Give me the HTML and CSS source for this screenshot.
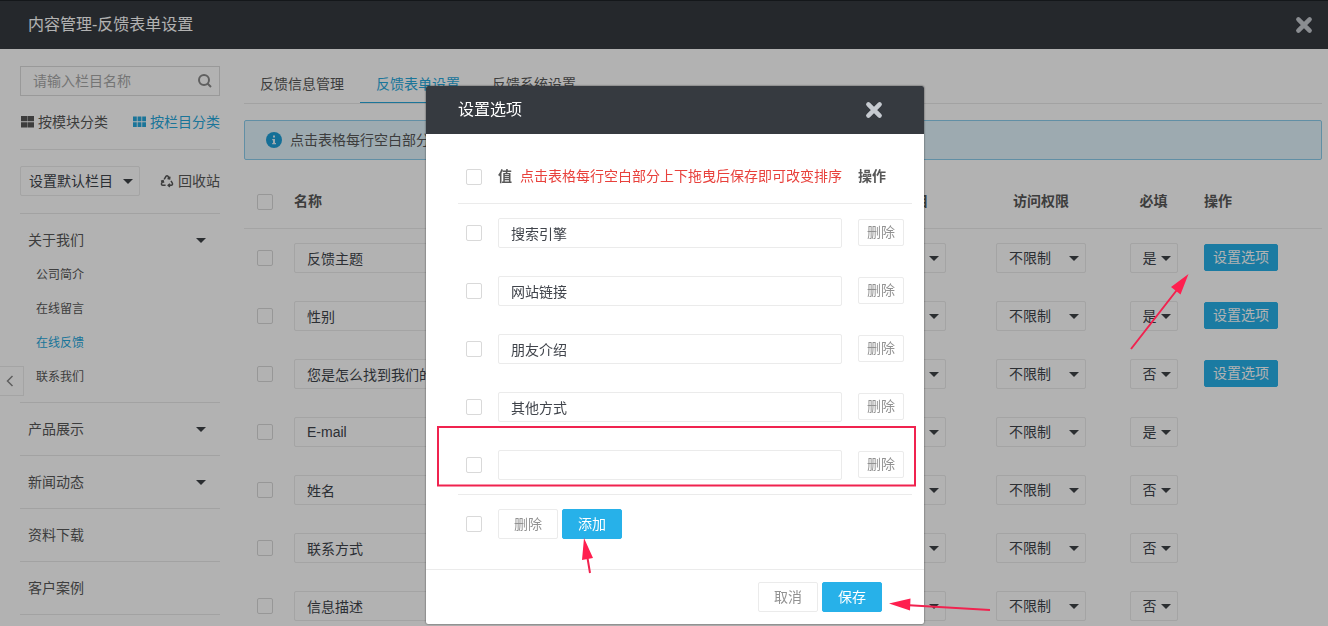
FILE: index.html
```html
<!DOCTYPE html>
<html lang="zh-CN">
<head>
<meta charset="utf-8">
<title>内容管理-反馈表单设置</title>
<link rel="stylesheet" href="styles.css">
</head>
<body>
<div class="app">
  <header class="topbar">
    <h1 class="bar-title">内容管理-反馈表单设置</h1>
    <button class="close" type="button" aria-label="关闭"><svg viewBox="0 0 16 16" width="16" height="16"><path d="M3 3L13 13M13 3L3 13"/></svg></button>
  </header>
  <div class="layout">
    <aside class="sidebar">
      <div class="search">
        <input class="search-input" type="text" placeholder="请输入栏目名称" aria-label="请输入栏目名称">
        <svg class="search-icon" viewBox="0 0 14 14" width="14" height="14"><circle cx="6" cy="6" r="5"/><path d="M9.5 9.5L13 13"/></svg>
      </div>
      <div class="modes">
        <a class="mode" href="#"><svg viewBox="0 0 13 12" width="13" height="12"><path d="M0 0h6.300v5.200H0zM6.700 0H13v5.200H6.700zM0 6.200h6.300v5.200H0zM6.700 6.200H13v5.200H6.700z"/></svg>按模块分类</a>
        <a class="mode mode-active" href="#"><svg viewBox="0 0 13 12" width="13" height="12"><path d="M0 .5h3.800v4.700H0zM4.600 .5h3.800v4.700H4.600zM9.200 .5H13v4.700H9.200zM0 6.200h3.800v4.700H0zM4.600 6.200h3.800v4.700H4.600zM9.200 6.200H13v4.700H9.200z"/></svg>按栏目分类</a>
      </div>
      <div class="tools">
        <span class="select select-default"><select aria-label="默认栏目"><option>设置默认栏目</option></select></span>
        <a class="recycle" href="#"><svg viewBox="0 0 14 14" width="14" height="14"><path d="M4.200 5.400L6 2.300Q7 1.200 8 2.300L9.400 4.600M9.900 2.600L9.600 4.900L7.500 4.500M11 6.800L12.400 9.200Q12.900 11.200 11.200 11.300H8.400M9.900 9.700L8.200 11.300L9.900 12.900M5.600 11.300H2.800Q1 11.200 1.600 9.200L3 6.800M1 7.300L3.100 6.700L3.700 8.700"/></svg>回收站</a>
      </div>
      <ul class="menu">
        <li class="menu-item menu-open">
          <a class="menu-link menu-parent" href="#">关于我们</a>
          <ul class="submenu">
            <li><a href="#">公司简介</a></li>
            <li><a href="#">在线留言</a></li>
            <li><a class="current" href="#">在线反馈</a></li>
            <li><a href="#">联系我们</a></li>
          </ul>
        </li>
        <li class="menu-item"><a class="menu-link menu-parent" href="#">产品展示</a></li>
        <li class="menu-item"><a class="menu-link menu-parent" href="#">新闻动态</a></li>
        <li class="menu-item"><a class="menu-link" href="#">资料下载</a></li>
        <li class="menu-item"><a class="menu-link" href="#">客户案例</a></li>
      </ul>
      <button class="collapse" type="button" aria-label="收起"><svg viewBox="0 0 8 12" width="8" height="12"><path d="M6.500 1L1.500 6L6.500 11"/></svg></button>
    </aside>
    <main class="content">
      <nav class="tabs">
        <a class="tab" href="#">反馈信息管理</a>
        <a class="tab tab-active" href="#">反馈表单设置</a>
        <a class="tab" href="#">反馈系统设置</a>
      </nav>
      <p class="notice"><svg viewBox="0 0 16 16" width="16" height="16"><circle cx="8" cy="8" r="8"/><path d="M7 3.500h2v2H7zM6.200 7H9v4h1v1.200H6.200V11H7V8.200H6.200z"/></svg>点击表格每行空白部分上下拖曳后保存即可改变排序</p>
      <table class="grid">
        <colgroup><col class="c-check"><col><col class="c-type"><col class="c-field"><col class="c-access"><col class="c-need"><col class="c-act"></colgroup>
        <thead>
          <tr><th class="center"><input class="check" type="checkbox" aria-label="全选"></th><th>名称</th><th class="center">字段类型</th><th class="center">所属栏目</th><th class="center">访问权限</th><th class="center">必填</th><th>操作</th></tr>
        </thead>
        <tbody id="fields"></tbody>
      </table>
    </main>
  </div>
</div>

<div class="overlay">
  <section class="modal" role="dialog" aria-labelledby="modal-title">
    <header class="modal-head">
      <h2 class="bar-title" id="modal-title">设置选项</h2>
      <button class="close" type="button" aria-label="关闭"><svg viewBox="0 0 16 16" width="16" height="16"><path d="M3 3L13 13M13 3L3 13"/></svg></button>
    </header>
    <div class="modal-body">
      <table class="grid options">
        <colgroup><col class="o-check"><col><col class="o-act"></colgroup>
        <thead>
          <tr><th><input class="check" type="checkbox" aria-label="全选"></th><th><span class="value-head">值<span class="hint">点击表格每行空白部分上下拖曳后保存即可改变排序</span></span></th><th>操作</th></tr>
        </thead>
        <tbody id="options"></tbody>
        <tfoot>
          <tr><td><input class="check" type="checkbox" aria-label="全选"></td><td colspan="2"><div class="actions"><button class="btn" type="button">删除</button><button class="btn btn-primary" type="button">添加</button></div></td></tr>
        </tfoot>
      </table>
    </div>
    <footer class="modal-foot actions"><button class="btn" type="button">取消</button><button class="btn btn-primary" type="button">保存</button></footer>
  </section>
</div>

<svg class="marks" viewBox="0 0 1328 626" width="1328" height="626" aria-hidden="true">
  <rect x="438" y="427" width="477" height="58.500"/>
  <path d="M1131 349L1180 286M590 573L587 555M990 610L905 605"/>
  <path class="head" d="M1188.500 274L1171 287L1180.500 294.500zM584 538L582 560L593 558zM889 603.500L910.500 598.500L910 610.500z"/>
</svg>
<script src="app.js"></script>
</body>
</html>
```
FILE: styles.css
```css
* { box-sizing: border-box; }
body {
  margin: 0;
  font: 14px/20px "Liberation Sans", "Noto Sans CJK SC", sans-serif;
  color: #585858;
  background: #fff;
}
h1, h2, p, ul { margin: 0; padding: 0; }
ul { list-style: none; }
a { color: inherit; text-decoration: none; }
button, input, select { font: inherit; color: inherit; margin: 0; }
svg { flex: none; }

.app { height: 100vh; overflow: hidden; }
.topbar {
  display: flex;
  align-items: center;
  justify-content: space-between;
  height: 49px;
  padding: 0 15px 0 28px;
  background: #363a40;
  border-top: 1px solid #1e2226;
  color: #fff;
}
.bar-title { font-size: 16px; line-height: 24px; font-weight: 400; }
.close { display: flex; padding: 0; border: 0; background: none; cursor: pointer; }
.close svg { width: 18px; height: 18px; fill: none; stroke: #c6cad0; stroke-width: 4; stroke-linecap: round; }

.layout { display: flex; gap: 24px; padding: 17px 6px 0 20px; }
.sidebar { flex: none; width: 200px; }
.content { flex: 1; min-width: 0; }

.search { display: flex; align-items: center; height: 30px; padding: 0 7px 0 12px; border: 1px solid #dcdcdc; }
.search-input { flex: 1; min-width: 0; padding: 0; border: 0; outline: 0; background: none; }
.search-input::placeholder { color: #a8a8a8; opacity: 1; }
.search-icon { fill: none; stroke: #8a8a8a; stroke-width: 2; }
.modes { display: flex; justify-content: space-between; padding: 16px 0 17px; border-bottom: 1px solid #e8e8e8; }
.mode { display: flex; align-items: center; gap: 4px; padding-left: 1px; }
.mode svg { fill: currentColor; }
.mode-active, .current { color: #27a8dc; }
.tools { display: flex; align-items: center; justify-content: space-between; padding: 16px 0 17px; border-bottom: 1px solid #e8e8e8; }
.recycle { display: flex; align-items: center; gap: 4px; }
.recycle svg { fill: none; stroke: currentColor; stroke-width: 1.5; }

.menu-item { padding: 12px 0; border-bottom: 1px solid #e8e8e8; }
.menu-open { padding-bottom: 8px; }
.menu-link { display: flex; align-items: center; justify-content: space-between; padding: 4px 14px 4px 8px; }
.menu-parent::after, .select::after {
  content: "";
  border: 5px solid transparent;
  border-top-color: #3e4347;
  border-bottom: 0;
}
.submenu { padding-top: 4px; font-size: 12px; line-height: 34px; }
.submenu a { display: block; padding-left: 16px; }
.collapse {
  position: absolute;
  left: 0;
  top: 366px;
  display: flex;
  align-items: center;
  width: 24px;
  height: 30px;
  padding: 0 0 0 6px;
  border: 1px solid #ebebeb;
  border-left: 0;
  background: #fff;
}
.collapse svg { fill: none; stroke: #888; stroke-width: 1.5; }

.tabs { display: flex; border-bottom: 1px solid #e8e8e8; }
.tab { padding: 8px 16px; border-bottom: 1px solid transparent; }
.tab-active { color: #27a8dc; border-bottom-color: #27a8dc; }
.notice {
  display: flex;
  align-items: center;
  gap: 8px;
  height: 40px;
  margin: 16px 0 15px;
  padding: 0 21px;
  border: 1px solid #8ccdec;
  border-radius: 2px;
  background: #e1f4fc;
}
.notice circle { fill: #1e9fd8; }
.notice path { fill: #e1f4fc; }

.grid { width: 100%; table-layout: fixed; border-collapse: separate; border-spacing: 0; }
.grid th, .grid td { padding: 0 8px; text-align: left; vertical-align: middle; }
.grid th { height: 54px; font-weight: 700; border-bottom: 1px solid #ebebeb; }
.grid th + th { padding-bottom: 2px; }
.grid td { height: 58px; }
.grid tbody td:last-child { padding-bottom: 2px; }
.grid .center { text-align: center; }
.grid .select { vertical-align: middle; }
.c-check { width: 42px; }
.c-type { width: 160px; }
.c-field { width: 141px; }
.c-access { width: 140px; }
.c-need { width: 85px; }
.c-act { width: 126px; }

.check {
  appearance: none;
  display: block;
  width: 16px;
  height: 16px;
  margin: 0 auto;
  border: 1px solid #d9d9d9;
  border-radius: 2px;
  background: #fff;
}
.field {
  display: block;
  width: 100%;
  height: 30px;
  padding: 0 12px;
  border: 1px solid #ebebeb;
  border-radius: 2px;
  background: #fff;
  color: #40444b;
  outline: 0;
}
.select { display: inline-grid; align-items: center; width: 90px; height: 30px; color: #40444b; }
.select > select, .select::after { grid-area: 1 / 1; }
.select > select {
  appearance: none;
  width: 100%;
  height: 30px;
  padding: 0 0 0 12px;
  border: 1px solid #ebebeb;
  border-radius: 2px;
  background: #fff;
}
.select::after { z-index: 1; justify-self: end; margin-right: 7px; pointer-events: none; }
.select-need { width: 48px; }
.select-default { width: 120px; }
.select-default > select { padding-left: 8px; }

.btn {
  height: 30px;
  padding: 0 15px;
  border: 1px solid #ebebeb;
  border-radius: 2px;
  background: #fff;
  color: #929292;
  white-space: nowrap;
  cursor: pointer;
}
.btn-primary { background: #27b1e9; border-color: #27b1e9; color: #fff; }
.btn-small { display: block; height: 27px; padding: 0 8px; }
.actions { display: flex; gap: 4px; }

.overlay {
  position: fixed;
  z-index: 2;
  inset: 0;
  display: flex;
  justify-content: center;
  align-items: flex-start;
  padding: 86px 0 0 22px;
  background: rgba(0, 0, 0, .3);
}
.modal { width: 498px; background: #fff; border-radius: 2px; overflow: hidden; box-shadow: 0 0 2px rgba(0, 0, 0, .7); }
.modal-head {
  display: flex;
  align-items: center;
  justify-content: space-between;
  height: 48px;
  padding: 0 41px 0 32px;
  background: #363a40;
  color: #fff;
}
.modal-body { padding: 16px 12px 17px 32px; }
.modal-foot { justify-content: flex-end; padding: 12px 42px 12px 0; border-top: 1px solid #ebebeb; }
.options tfoot td { border-top: 1px solid #ebebeb; }
.o-check { width: 32px; }
.o-act { width: 62px; }
.value-head { display: flex; gap: 8px; white-space: nowrap; }
.hint { color: #e8413c; font-weight: 400; }

.marks { position: fixed; z-index: 3; left: 0; top: 0; pointer-events: none; fill: none; stroke: #f0234f; stroke-width: 2; }
.marks .head { fill: #ff1f4f; stroke: none; }
```
FILE: app.js
```js
const fields = [
  ["反馈主题", "是", true],
  ["性别", "是", true],
  ["您是怎么找到我们的", "否", true],
  ["E-mail", "是", false],
  ["姓名", "否", false],
  ["联系方式", "否", false],
  ["信息描述", "否", false]
];
const options = ["搜索引擎", "网站链接", "朋友介绍", "其他方式", ""];

const select = (label, text, cls = "") =>
  `<span class="select ${cls}"><select aria-label="${label}"><option>${text}</option></select></span>`;

document.getElementById("fields").innerHTML = fields.map(([name, need, configurable]) => `
  <tr>
    <td><input class="check" type="checkbox" aria-label="选择${name}"></td>
    <td><input class="field" type="text" value="${name}" aria-label="名称"></td>
    <td class="center">${select("字段类型", "简短")}</td>
    <td class="center">${select("所属栏目", "所有")}</td>
    <td class="center">${select("访问权限", "不限制")}</td>
    <td class="center">${select("必填", need, "select-need")}</td>
    <td>${configurable ? '<button class="btn btn-primary btn-small" type="button">设置选项</button>' : ""}</td>
  </tr>`).join("");

document.getElementById("options").innerHTML = options.map(value => `
  <tr>
    <td><input class="check" type="checkbox" aria-label="选择选项"></td>
    <td><input class="field" type="text" value="${value}" aria-label="值"></td>
    <td><button class="btn btn-small" type="button">删除</button></td>
  </tr>`).join("");
```
